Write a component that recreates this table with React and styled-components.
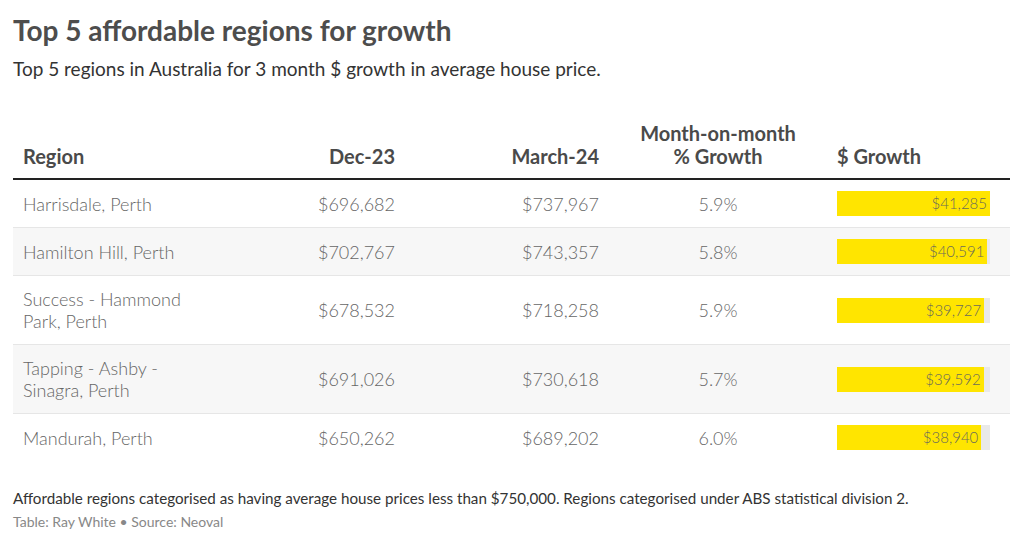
import styled, { createGlobalStyle } from 'styled-components';

const rows = [
    { region: 'Harrisdale, Perth', dec: '$696,682', mar: '$737,967', pct: '5.9%', growth: 41285 },
    { region: 'Hamilton Hill, Perth', dec: '$702,767', mar: '$743,357', pct: '5.8%', growth: 40591 },
    { region: 'Success - Hammond Park, Perth', dec: '$678,532', mar: '$718,258', pct: '5.9%', growth: 39727 },
    { region: 'Tapping - Ashby - Sinagra, Perth', dec: '$691,026', mar: '$730,618', pct: '5.7%', growth: 39592 },
    { region: 'Mandurah, Perth', dec: '$650,262', mar: '$689,202', pct: '6.0%', growth: 38940 },
];

const maxGrowth = Math.max(...rows.map((r) => r.growth));

const GlobalStyle = createGlobalStyle`
    html, body {
        margin: 0;
        padding: 0;
        background: #ffffff;
    }
    body {
        font-family: Lato, "Open Sans", sans-serif;
        color: #333333;
    }
`;

const App = () => {
    return (
        <>
            <GlobalStyle />
            <ChartLayout>
                <Title>Top 5 affordable regions for growth</Title>
                <Subtitle>Top 5 regions in Australia for 3 month $ growth in average house price.</Subtitle>
                <Table>
                    <colgroup>
                        <col style={{ width: 200 }} />
                        <col style={{ width: 192 }} />
                        <col style={{ width: 204 }} />
                        <col style={{ width: 218 }} />
                        <col style={{ width: 183 }} />
                    </colgroup>
                    <thead>
                        <tr>
                            <HeadCell $align="left">Region</HeadCell>
                            <HeadCell $align="right">Dec-23</HeadCell>
                            <HeadCell $align="right">March-24</HeadCell>
                            <HeadCell $align="center">
                                Month-on-month
                                <br />% Growth
                            </HeadCell>
                            <HeadCell $align="left">$ Growth</HeadCell>
                        </tr>
                    </thead>
                    <tbody>
                        {rows.map((row, i) => (
                            <Row key={row.region} $striped={i % 2 === 1}>
                                <Cell $align="left">{row.region}</Cell>
                                <Cell $align="right">{row.dec}</Cell>
                                <Cell $align="right">{row.mar}</Cell>
                                <Cell $align="center">{row.pct}</Cell>
                                <BarCell>
                                    <BarTrack>
                                        <Bar style={{ width: `${(row.growth / maxGrowth) * 100}%` }}>
                                            ${row.growth.toLocaleString('en-US')}
                                        </Bar>
                                    </BarTrack>
                                </BarCell>
                            </Row>
                        ))}
                    </tbody>
                </Table>
                <Notes>
                    Affordable regions categorised as having average house prices less than $750,000. Regions
                    categorised under ABS statistical division 2.
                </Notes>
                <Source>Table: Ray White • Source: Neoval</Source>
            </ChartLayout>
        </>
    );
};

export default App;

const ChartLayout = styled.div`
    width: 1024px;
    height: 544px;
    box-sizing: border-box;
    padding: 13px 14px 0 13px;
    overflow: hidden;
`;

const Title = styled.h1`
    margin: 0;
    font-size: 28px;
    line-height: 34px;
    font-weight: 700;
    color: #4d4d4d;
`;

const Subtitle = styled.p`
    margin: 10px 0 0;
    font-size: 19px;
    line-height: 24px;
    font-weight: 400;
    color: #333333;
`;

const Table = styled.table`
    width: 997px;
    margin-top: 41px;
    border-collapse: collapse;
    table-layout: fixed;
`;

const HeadCell = styled.th`
    text-align: ${(p) => p.$align};
    vertical-align: bottom;
    padding: 0 10px 10px;
    font-size: 20px;
    line-height: 23px;
    font-weight: 700;
    color: #4a4a4a;
    border-bottom: 2px solid #222222;
`;

const Row = styled.tr`
    background: ${(p) => (p.$striped ? '#f7f7f7' : '#ffffff')};
    border-bottom: 1px solid #e6e6e6;

    &:last-child {
        border-bottom: none;
    }
`;

const Cell = styled.td`
    text-align: ${(p) => p.$align};
    vertical-align: middle;
    padding: 12px 10px;
    font-size: 18px;
    line-height: 22px;
    font-weight: 300;
    color: #666666;
`;

const BarCell = styled.td`
    vertical-align: middle;
    padding: 11px 20px 11px 10px;
`;

const BarTrack = styled.div`
    height: 25px;
    background: #e9e9e9;
    display: flex;
`;

const Bar = styled.div`
    height: 100%;
    background: #ffe500;
    box-sizing: border-box;
    padding-right: 3px;
    text-align: right;
    font-size: 15px;
    line-height: 25px;
    font-weight: 300;
    color: #6b6b5a;
`;

const Notes = styled.p`
    margin: 27px 0 0;
    font-size: 15.2px;
    line-height: 20px;
    color: #333333;
`;

const Source = styled.p`
    margin: 5px 0 0;
    font-size: 14px;
    line-height: 18px;
    color: #888888;
`;
